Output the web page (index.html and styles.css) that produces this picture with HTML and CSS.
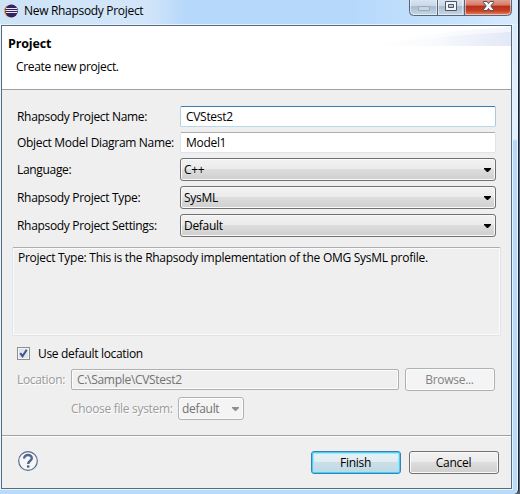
FILE: index.html
```
<!DOCTYPE html>
<html lang="en">
<head>
<meta charset="utf-8">
<title>New Rhapsody Project</title>
<link rel="stylesheet" href="styles.css">
</head>
<body>
<div class="window">
  <header class="titlebar">
    <svg class="app-icon" width="14" height="14" viewBox="0 0 14 14">
      <circle cx="6.3" cy="7" r="6.3" fill="#f39a3c"/>
      <circle cx="7.5" cy="7" r="6.4" fill="#302562"/>
      <path d="M2 4.500h11M1.500 6.500h12M2 8.500h11" stroke="#e8e6f3" stroke-width="1"/>
    </svg>
    <span class="caption">New Rhapsody Project</span>
    <div class="controls">
      <svg width="103" height="16" viewBox="0 0 103 16">
        <defs>
          <linearGradient id="glass" x2="0" y2="1"><stop offset="0" stop-color="#dbe7f3"/><stop offset=".42" stop-color="#c8d8e8"/><stop offset=".46" stop-color="#a8bccf"/><stop offset="1" stop-color="#c5d9ea"/></linearGradient>
          <linearGradient id="red" x2="0" y2="1"><stop offset="0" stop-color="#e4a79a"/><stop offset=".38" stop-color="#d47a68"/><stop offset=".45" stop-color="#b92e17"/><stop offset=".75" stop-color="#c74125"/><stop offset="1" stop-color="#e58c68"/></linearGradient>
        </defs>
        <path d="M.5-1V11.500Q.5 15.500 4.500 15.500H98.500Q102.500 15.500 102.500 11.500V-1Z" fill="url(#glass)"/>
        <path d="M55.500-1V15H98.500Q102 15 102 11.500V-1Z" fill="url(#red)"/>
        <path d="M1.500 0V11Q1.500 14.500 5 14.500H27.500V0M29.500 0V14.500H53.500V0M56.500 0V14.500H98Q101.500 14.500 101.500 11V0" fill="none" stroke="#fff" stroke-opacity=".5"/>
        <path d="M.5-1V11.500Q.5 15.500 4.500 15.500H98.500Q102.500 15.500 102.500 11.500V-1M28.500 0V15M55.500 0V15" fill="none" stroke="#56667a"/>
        <rect x="9.500" y="6.500" width="11" height="4" rx=".5" fill="#c9d5df" stroke="#9dabb9"/>
        <path d="M36.500 1.500h11v9h-11zM39.500 4.500v3h5v-3z" fill="#f4f4f4" stroke="#4e5563" fill-rule="evenodd"/>
        <path d="M74.500 1.500H78L79.500 3.500 81 1.500H84.500V2.500L81.800 6 84.500 9.500V10.500H81L79.500 8.500 78 10.500H74.500V9.500L77.200 6 74.500 2.500Z" fill="#f6f6f6" stroke="#514e5c"/>
      </svg>
    </div>
  </header>
  <main class="client">
    <section class="banner">
      <svg class="swoosh" width="150" height="20" viewBox="0 0 150 20">
        <defs><linearGradient id="sw"><stop offset="0" stop-color="#fff"/><stop offset=".45" stop-color="#f7f9fd"/><stop offset="1" stop-color="#dfe5f6"/></linearGradient></defs>
        <path d="M10 20Q75 4 150 1V20Z" fill="url(#sw)" opacity=".4"/>
        <path d="M10 20Q85 9 150 6V20Z" fill="url(#sw)" opacity=".8"/>
      </svg>
      <h1>Project</h1>
      <p>Create new project.</p>
    </section>
    <section class="form">
      <label>Rhapsody Project Name:</label><div class="field focused">CVStest2</div>
      <label>Object Model Diagram Name:</label><div class="field">Model1</div>
      <label>Language:</label><div class="combo">C++<i class="arrow"></i></div>
      <label>Rhapsody Project Type:</label><div class="combo">SysML<i class="arrow"></i></div>
      <label>Rhapsody Project Settings:</label><div class="combo">Default<i class="arrow"></i></div>
    </section>
    <div class="description">Project Type: This is the Rhapsody implementation of the OMG SysML profile.</div>
    <div class="check-row">
      <span class="checkbox"><svg width="9" height="9" viewBox="0 0 9 9"><path d="M1.200 4.200 3.500 7.200 7.700 .8" fill="none" stroke="#3d5292" stroke-width="2"/></svg></span>
      <span>Use default location</span>
    </div>
    <div class="location-row">
      <label>Location:</label><div class="field disabled">C:\Sample\CVStest2</div><div class="button disabled">Browse...</div>
    </div>
    <div class="system-row">
      <label>Choose file system:</label><div class="combo disabled">default<i class="arrow"></i></div>
    </div>
    <footer class="footer">
      <svg class="help" width="20" height="20" viewBox="0 0 20 20">
        <circle cx="10" cy="10" r="9.300" fill="#f5f6f8" stroke="#596c8e" stroke-width="1.200"/>
        <path d="M6.200 7.600C6 2.800 13.800 2.800 13.800 7.200 13.800 9.700 10.200 9.800 10.200 13" fill="none" stroke="#536789" stroke-width="2.400"/>
        <rect x="8.900" y="14.200" width="2.600" height="2.600" rx=".7" fill="#536789"/>
      </svg>
      <div class="button primary">Finish</div>
      <div class="button">Cancel</div>
    </footer>
  </main>
</div>
</body>
</html>
```
FILE: styles.css
```
* { box-sizing: border-box; }
body {
  margin: 0;
  width: 520px;
  height: 494px;
  overflow: hidden;
  background: #59636f;
  color: #000;
  font: 12px/16px "Open Sans", "Noto Sans", sans-serif;
  letter-spacing: -0.3px;
  white-space: nowrap;
}
.window {
  width: 519px;
  height: 494px;
  padding-left: 1px;
  border-right: 1px solid #172330;
  border-bottom-right-radius: 5px;
  background: linear-gradient(#d5e9fc 0, #e2f1fd 139px, #b5d9fc 141px, #b8dafb 100%);
  box-shadow: inset -1px 0 #e9f5ff;
}
.titlebar {
  display: flex;
  align-items: flex-start;
  height: 25px;
  margin-left: -1px;
  padding: 4px 7px 0 4px;
  background: linear-gradient(90deg, #cfe3f7 0, #d3e6f9 28%, #b6d8fa 36%, #b6d9fb 68%, #c9e3fc 90%, #d8ebfd 100%);
  box-shadow: inset 0 -1px #e2f0fd;
}
.app-icon { flex: none; }
.caption { margin: -1px 0 0 6px; letter-spacing: -0.31px; }
.controls { margin: -4px -1px 0 auto; height: 16px; }
.controls svg { display: block; }
.client {
  width: 511px;
  height: 464px;
  border: 1px solid #586a7e;
  background: #efefef;
  box-shadow: 0 0 0 1px #e7f4ff;
}
.banner {
  position: relative;
  height: 64px;
  padding: 10px 6px 0;
  background: #fff;
  border-bottom: 1px solid #a0a0a0;
}
.swoosh { position: absolute; right: 0; top: 0; }
.banner h1 { margin: 0; font-size: 12.5px; line-height: 16px; letter-spacing: -0.15px; }
.banner p { margin: 7px 0 0 8px; letter-spacing: -0.33px; }
.form {
  display: grid;
  grid-template-columns: 163px 316px;
  grid-template-rows: 21px 21px 23px 23px 23px;
  row-gap: 5px;
  align-items: center;
  padding: 16px 0 0 15px;
}
label { padding-top: 1px; letter-spacing: -0.32px; }
.field, .combo {
  display: flex;
  align-items: center;
  border: 1px solid #e2e3ea;
  border-radius: 2px;
}
.field {
  height: 21px;
  padding: 1px 5px 0;
  border-top-color: #abadb3;
  background: #fff;
}
.field.focused { border-color: #3d7bad #a4c9e3 #b7d9ed #b5cfe7; }
.combo, .button {
  height: 23px;
  border: 1px solid #707070;
  border-radius: 3px;
  background: linear-gradient(#f2f2f2 0, #ebebeb 48%, #dddddd 50%, #cfcfcf 100%);
  box-shadow: inset 0 0 0 1px #fafafa;
}
.combo { justify-content: space-between; padding: 1px 4px 0 3px; }
.arrow {
  width: 7px;
  height: 4px;
  background: #000;
  clip-path: polygon(0 0, 100% 0, 100% 25%, 57% 100%, 43% 100%, 0 25%);
}
.description {
  width: 489px;
  height: 89px;
  margin: 10px 0 0 10px;
  padding: 2px 5px;
  border: 1px solid #dfe3eb;
  border-top-color: #abadb3;
  border-radius: 2px;
  box-shadow: inset 0 0 0 1px #fbfbfb;
  letter-spacing: -0.28px;
}
.check-row {
  display: flex;
  align-items: center;
  height: 16px;
  margin: 10px 0 0 15px;
  gap: 8px;
  letter-spacing: -0.33px;
}
.checkbox {
  display: grid;
  place-items: center;
  width: 13px;
  height: 13px;
  margin-bottom: 1px;
  border: 1px solid #8e8f8f;
  background: #dfe4ea;
  box-shadow: inset 0 0 0 1px #f4f4f4;
}
.location-row { display: flex; align-items: center; height: 23px; margin: 6px 0 0 15px; }
.location-row label { width: 54px; }
.location-row .field { width: 328px; margin-right: 6px; }
.location-row label, .system-row label { color: #9b9b9b; text-shadow: 1px 1px #fff; }
.system-row { display: flex; align-items: center; height: 23px; margin: 6px 0 0 69px; }
.system-row label { width: 107px; }
.system-row .combo { width: 66px; }
.disabled { color: #727272; border-color: #adb2b5; background: #f4f4f4; box-shadow: inset 0 0 0 1px #fcfcfc; }
.field.disabled { border-color: #afafaf; background: #efefef; }
.disabled .arrow { background: #8f8f8f; }
.button {
  display: flex;
  align-items: center;
  justify-content: center;
  width: 90px;
  padding: 1px 1px 0 0;
}
.button.disabled { color: #838383; border-color: #adb2b5; background: #f4f4f4; }
.footer {
  display: flex;
  align-items: flex-start;
  margin-top: 15px;
  height: 52px;
  padding: 15px 12px 0 16px;
  border-top: 1px solid #a0a0a0;
  box-shadow: inset 0 1px #fff;
}
.button.primary {
  margin: 0 8px 0 auto;
  border-color: #3c7fb1;
  background: linear-gradient(#eaf3f7 0, #dfecf2 48%, #cbdfe8 50%, #bed8e3 100%);
  box-shadow: inset 0 0 0 1px #42d0f4, inset 0 0 1px 2px #a5e3f5;
}
```
